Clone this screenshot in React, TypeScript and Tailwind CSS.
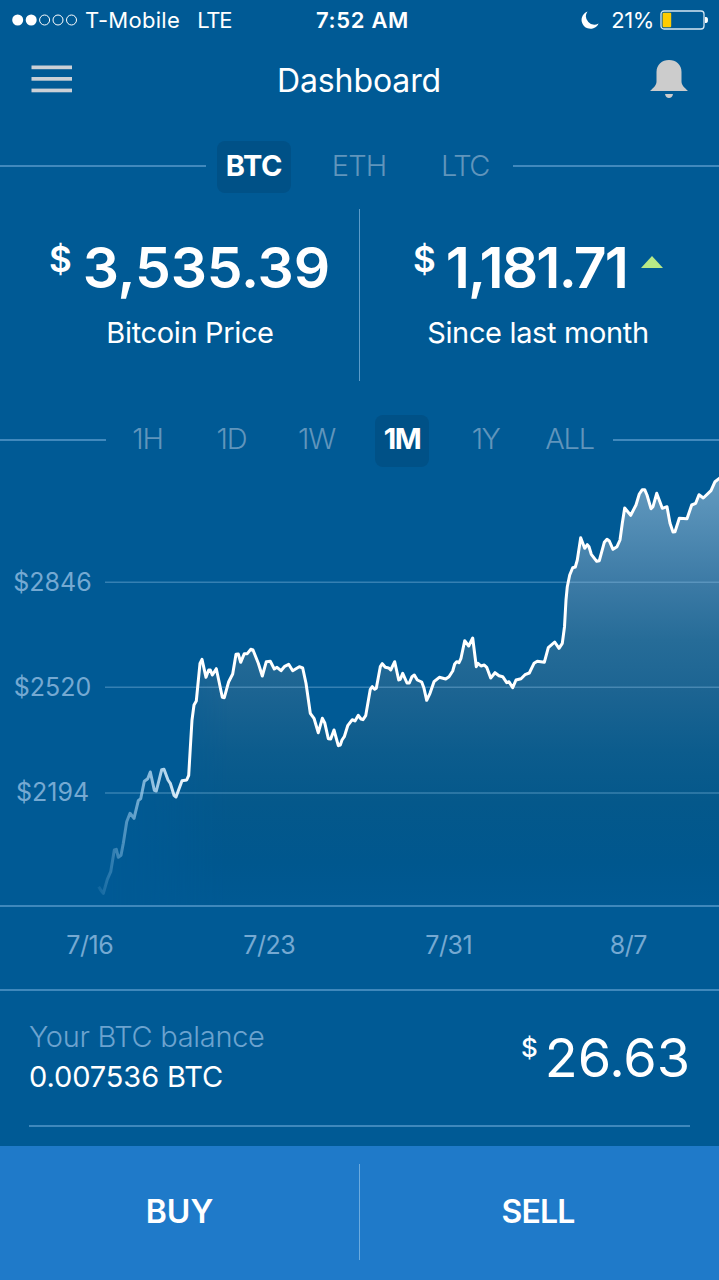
import React from "react";

const PRICE_POINTS =
  "98.7,886.7 101,890.5 103.3,893.3 107.3,879.3 110.7,871.7 114.3,850 116.3,849.3 118.3,857.3 121,855.3 123.3,843.3 126.7,821.7 130,813.3 134,818.3 138.3,800.7 140.7,798.7 144.3,781.3 147.7,778.7 150.3,772 154.3,790.3 156.3,791 161.7,769.7 164,769.3 168,780 170.3,783.3 174,795.3 176,797 182,780.7 186.7,780 188.7,775.3 190.3,748 192,720 194,705 196.3,701 200,663.3 202,659.3 206,677.3 208.7,670 210.3,670 212.3,675 216.3,668.7 218.7,680 222.3,697.3 224.3,697.7 228.7,681.7 232.7,674 236,654.3 238.3,654 240.7,662.3 244.3,653.7 247.3,653.7 250.7,649.3 253,650 258.3,663.3 262.3,676 266.3,661.7 270.3,661.3 274.3,669 277,667.3 281,670.7 284.7,666.3 288.7,664.3 292.7,670.7 299.3,666.7 302.7,668 306,683.3 310.3,713.3 314,718.3 318.3,732.7 322.3,718.3 324.7,722.7 328.3,738.7 330.7,739 334,730 338.3,745.7 340.3,745 342,740 344.3,736.7 347.7,725.7 352.3,719.7 355,721 358.3,715.3 361,719 363,719.7 365.7,715.7 370.3,689.3 372.3,686.7 374.7,689.3 376.3,688.3 380.3,666.7 382.3,663.7 385.3,667.3 388.7,668 390.7,670 394.7,661.7 398.7,680 400.3,679.3 402.7,673.3 407,683 409.3,683 412,676.7 414.3,675 417.3,680 421.7,682 424,688.3 426.7,700.3 430,693.3 434,681.7 439.3,677.3 445.7,679 449,676.7 452.7,671 454.7,664 456.7,661.7 459,662.7 461,658.3 464.7,640.7 468.7,646 472.7,638 476.3,666.7 478,663.3 481,666 484.3,665 486.7,667.3 490.7,678 495,672.7 499,675.7 502.7,676.7 506.7,682.7 509,681.7 512.7,687.7 516,680 521,678.7 525,674.7 529.3,673 534,663.3 537.3,661.3 544.3,662.3 548.3,647.7 554.7,642 559,648.3 562.3,643.3 564.5,626.7 566,600 567.3,586.7 569.7,575 572.7,567.7 575.3,567 577.3,560 580.7,537.7 584.7,548.3 587.3,544.7 589,546.7 591.3,554.3 596.7,561.3 599.3,560.7 604.3,542.3 607,539.3 609.3,541 613,549.3 617,546.7 620,540 622.3,523.3 624.7,508 630.7,515.3 636,505 639.3,494 642.3,489.7 644.7,489.7 647,495 651,508.7 653,506.7 656.7,493.3 662.3,508.3 667,506.7 670,523.3 673,532 675,531.7 679.3,518.3 687,518.7 691.7,505 695.7,503.3 699,494.7 703.3,498 711,490.7 715,481.7 721,477";

function StatusBar() {
  return (
    <header className="grid h-10 grid-cols-3 items-center text-[22px] leading-none">
      <div className="flex items-center pl-3">
        <svg width="66" height="12" viewBox="0 0 66 12" fill="white" stroke="white">
          <circle cx="5.7" cy="6" r="5.5" stroke="none" />
          <circle cx="19.2" cy="6" r="5.5" stroke="none" />
          <circle cx="32.6" cy="6" r="5" fill="none" />
          <circle cx="46" cy="6" r="5" fill="none" />
          <circle cx="59.5" cy="6" r="5" fill="none" />
        </svg>
        <span className="ml-[7px] whitespace-nowrap tracking-[0.3px]">T-Mobile</span>
        <span className="ml-[17px] tracking-[-1.2px]">LTE</span>
      </div>
      <div className="pl-1.5 text-center font-semibold tracking-[0.7px]">7:52 AM</div>
      <div className="flex items-center justify-end pr-[11px]">
        <svg width="18" height="18" viewBox="0 0 18 18" fill="white">
          <path d="M6.500 0.500A8.900 8.900 0 1 0 17.600 12.500A8.400 8.400 0 0 1 6.500 0.500Z" />
        </svg>
        <span className="ml-3 tracking-[-0.4px]">21%</span>
        <svg className="ml-1.5" width="48" height="20" viewBox="0 0 48 20">
          <rect x="1" y="1" width="43" height="18" rx="3" fill="none" stroke="#d5e6f2" strokeWidth="1.3" />
          <rect x="2.6" y="2.7" width="8.6" height="14.6" rx="1" fill="#ffcc00" />
          <path d="M45 7h1a2 3 0 0 1 0 6h-1z" fill="white" />
        </svg>
      </div>
    </header>
  );
}

function TitleBar() {
  return (
    <div className="flex h-[81px] items-center justify-between pr-[30px] pl-[31px]">
      <svg className="-mt-1" width="42" height="28" viewBox="0 0 42 28" fill="#cbd0d6">
        <rect x="0.5" y="0.5" width="40.5" height="3.7" />
        <rect x="0.5" y="12" width="40.5" height="3.7" />
        <rect x="0.5" y="23.6" width="40.5" height="3.7" />
      </svg>
      <h1 className="-ml-1 pt-px text-[32px] leading-none tracking-[-0.1px]">Dashboard</h1>
      <svg className="-mt-1" width="40" height="40" viewBox="0 0 40 40" fill="#cccccc">
        <path d="M1 32C4 29 7.500 26.500 7.500 22.500V13C7.500 5.500 13 1 20 1S32.500 5.500 32.500 13V22.500C32.500 26.500 36 29 39 32Z" />
        <path d="M16 35H24C23.6 37.5 22 39 20 39S16.400 37.500 16 35Z" />
      </svg>
    </div>
  );
}

const tab = "flex shrink-0 items-center justify-center text-[29px] leading-none";
const idle = "font-[350] text-[#6095bc]";
const active = "h-[52px] rounded-lg bg-[#005187] font-bold text-white";

function CurrencyTabs() {
  return (
    <nav className="mt-5 flex h-[52px] items-center">
      <div className="-mt-0.5 h-0.5 w-[206px] bg-[#4189bd]" />
      <button className={`${tab} ${active} ml-[11px] w-[74px] pb-[3px] tracking-[-0.3px]`}>BTC</button>
      <button className={`${tab} ${idle} w-[136px] pb-[3px] tracking-[-0.9px]`}>ETH</button>
      <button className={`${tab} ${idle} w-[76px] pb-[3px] tracking-[-1.5px]`}>LTC</button>
      <div className="-mt-0.5 ml-2.5 h-0.5 flex-1 bg-[#4189bd]" />
    </nav>
  );
}

function Stats() {
  return (
    <section className="mt-4 flex h-[172px]">
      <div className="w-[359px]">
        <div className="flex h-[117px] items-center pl-[49px] font-semibold leading-none">
          <span className="-mt-4 text-[35px]">$</span>
          <span className="ml-[11px] text-[57px] tracking-[-0.2px]">3,535.39</span>
        </div>
        <p className="pl-[21px] text-center text-[29px] leading-[14px] tracking-[-0.35px]">Bitcoin Price</p>
      </div>
      <div className="w-px bg-[#5c9cca]" />
      <div className="flex-1">
        <div className="flex h-[117px] items-center pl-[53px] font-semibold leading-none">
          <span className="-mt-4 text-[35px]">$</span>
          <span className="ml-[10px] text-[57px] tracking-[-1.8px]">1,181.71</span>
          <svg className="-mt-3 ml-3.5" width="22" height="12" viewBox="0 0 22 12">
            <path d="M11 0L22 12H0Z" fill="#b8e986" />
          </svg>
        </div>
        <p className="pr-[3px] text-center text-[29px] leading-[14px] tracking-[-0.35px]">Since last month</p>
      </div>
    </section>
  );
}

function RangeTabs() {
  return (
    <nav className="mt-[34px] flex h-[52px] items-center">
      <div className="-mt-[3px] h-0.5 w-[106px] bg-[#4189bd]" />
      <button className={`${tab} ${idle} w-[84px] pr-px pb-[5px] tracking-[-1.2px]`}>1H</button>
      <button className={`${tab} ${idle} w-[84px] pr-px pb-[5px] tracking-[-1.2px]`}>1D</button>
      <button className={`${tab} ${idle} w-[86px] pr-px pb-[5px] tracking-[-1.2px]`}>1W</button>
      <button className={`${tab} ${active} ml-[15px] w-[54px] pb-[5px] tracking-[-1.5px]`}>1M</button>
      <button className={`${tab} ${idle} w-[113px] pb-[5px] tracking-[-1.7px]`}>1Y</button>
      <button className={`${tab} ${idle} w-[55px] pb-[5px] tracking-[-1.2px]`}>ALL</button>
      <div className="-mt-[3px] ml-4 h-0.5 flex-1 bg-[#4189bd]" />
    </nav>
  );
}

function PriceChart() {
  return (
    <section className="relative h-[438px]">
      <svg className="block" width="719" height="438" viewBox="0 467 719 438">
        <defs>
          <linearGradient id="area" gradientUnits="userSpaceOnUse" x1="0" y1="478" x2="0" y2="905">
            <stop offset="0" stopColor="#649bc0" />
            <stop offset="0.24" stopColor="#3d7ba6" />
            <stop offset="0.38" stopColor="#266c98" />
            <stop offset="0.5" stopColor="#1c6492" />
            <stop offset="0.64" stopColor="#0c5c8d" />
            <stop offset="0.76" stopColor="#04588b" />
            <stop offset="0.9" stopColor="#00578e" />
            <stop offset="1" stopColor="#005993" />
          </linearGradient>
          <linearGradient id="fade" gradientUnits="userSpaceOnUse" x1="110" y1="0" x2="230" y2="0">
            <stop offset="0" stopColor="white" stopOpacity="0" />
            <stop offset="1" stopColor="white" />
          </linearGradient>
          <linearGradient id="line" gradientUnits="userSpaceOnUse" x1="98" y1="0" x2="190" y2="0">
            <stop offset="0" stopColor="#9fd0f2" stopOpacity="0.1" />
            <stop offset="0.4" stopColor="#a8d4f3" stopOpacity="0.6" />
            <stop offset="0.75" stopColor="#cfe8f9" stopOpacity="0.9" />
            <stop offset="1" stopColor="white" />
          </linearGradient>
          <mask id="left" maskUnits="userSpaceOnUse" x="0" y="467" width="719" height="438">
            <rect x="0" y="467" width="719" height="438" fill="url(#fade)" />
          </mask>
        </defs>
        <polygon points={`${PRICE_POINTS} 721,905 98.7,905`} fill="url(#area)" mask="url(#left)" />
        <path d="M105 582.300H719M105 687.300H719M105 793H719" stroke="#8cc0e6" strokeOpacity="0.38" strokeWidth="1.6" />
        <polyline points={PRICE_POINTS} fill="none" stroke="url(#line)" strokeWidth="3" strokeLinejoin="round" />
      </svg>
      <div className="absolute inset-y-0 left-0 flex w-[105px] flex-col pt-[63px] text-center text-[25px] leading-[105px] text-[#75a9d2]">
        <span>$2846</span>
        <span>$2520</span>
        <span>$2194</span>
      </div>
    </section>
  );
}

function DateAxis() {
  return (
    <div className="grid h-[86px] grid-cols-4 items-center border-y-2 border-[#3f88bc] pr-px pb-1.5 text-center text-[25px] leading-none tracking-[-0.5px] text-[#75a9d2]">
      <span>7/16</span>
      <span>7/23</span>
      <span>7/31</span>
      <span>8/7</span>
    </div>
  );
}

function Balance() {
  return (
    <section className="mx-[29px] flex h-[136px] items-center justify-between border-b-2 border-[#3f88bc]">
      <div className="pb-[3px] text-[29px] leading-10">
        <p className="font-[350] tracking-[-0.3px] text-[#6ca3cf]">Your BTC balance</p>
        <p className="tracking-[-0.1px]">0.007536 BTC</p>
      </div>
      <div className="flex items-center leading-none">
        <span className="-mt-5 text-[26px] font-medium">$</span>
        <span className="ml-[7px] text-[54px] tracking-[-0.1px]">26.63</span>
      </div>
    </section>
  );
}

function Actions() {
  return (
    <footer className="mt-[19px] flex h-[134px] items-center bg-[#1f7ac9] text-[32px] leading-none font-semibold">
      <button className="h-full w-[359px] pb-0.5">BUY</button>
      <div className="mb-0.5 h-24 w-px bg-[#6babdf]" />
      <button className="h-full flex-1 pr-[3px] pb-0.5 tracking-[-0.9px]">SELL</button>
    </footer>
  );
}

export default function App() {
  return (
    <main className="flex h-[1280px] w-[719px] flex-col overflow-hidden bg-[#005a95] font-['Inter',sans-serif] text-white">
      <StatusBar />
      <TitleBar />
      <CurrencyTabs />
      <Stats />
      <RangeTabs />
      <PriceChart />
      <DateAxis />
      <Balance />
      <Actions />
    </main>
  );
}
